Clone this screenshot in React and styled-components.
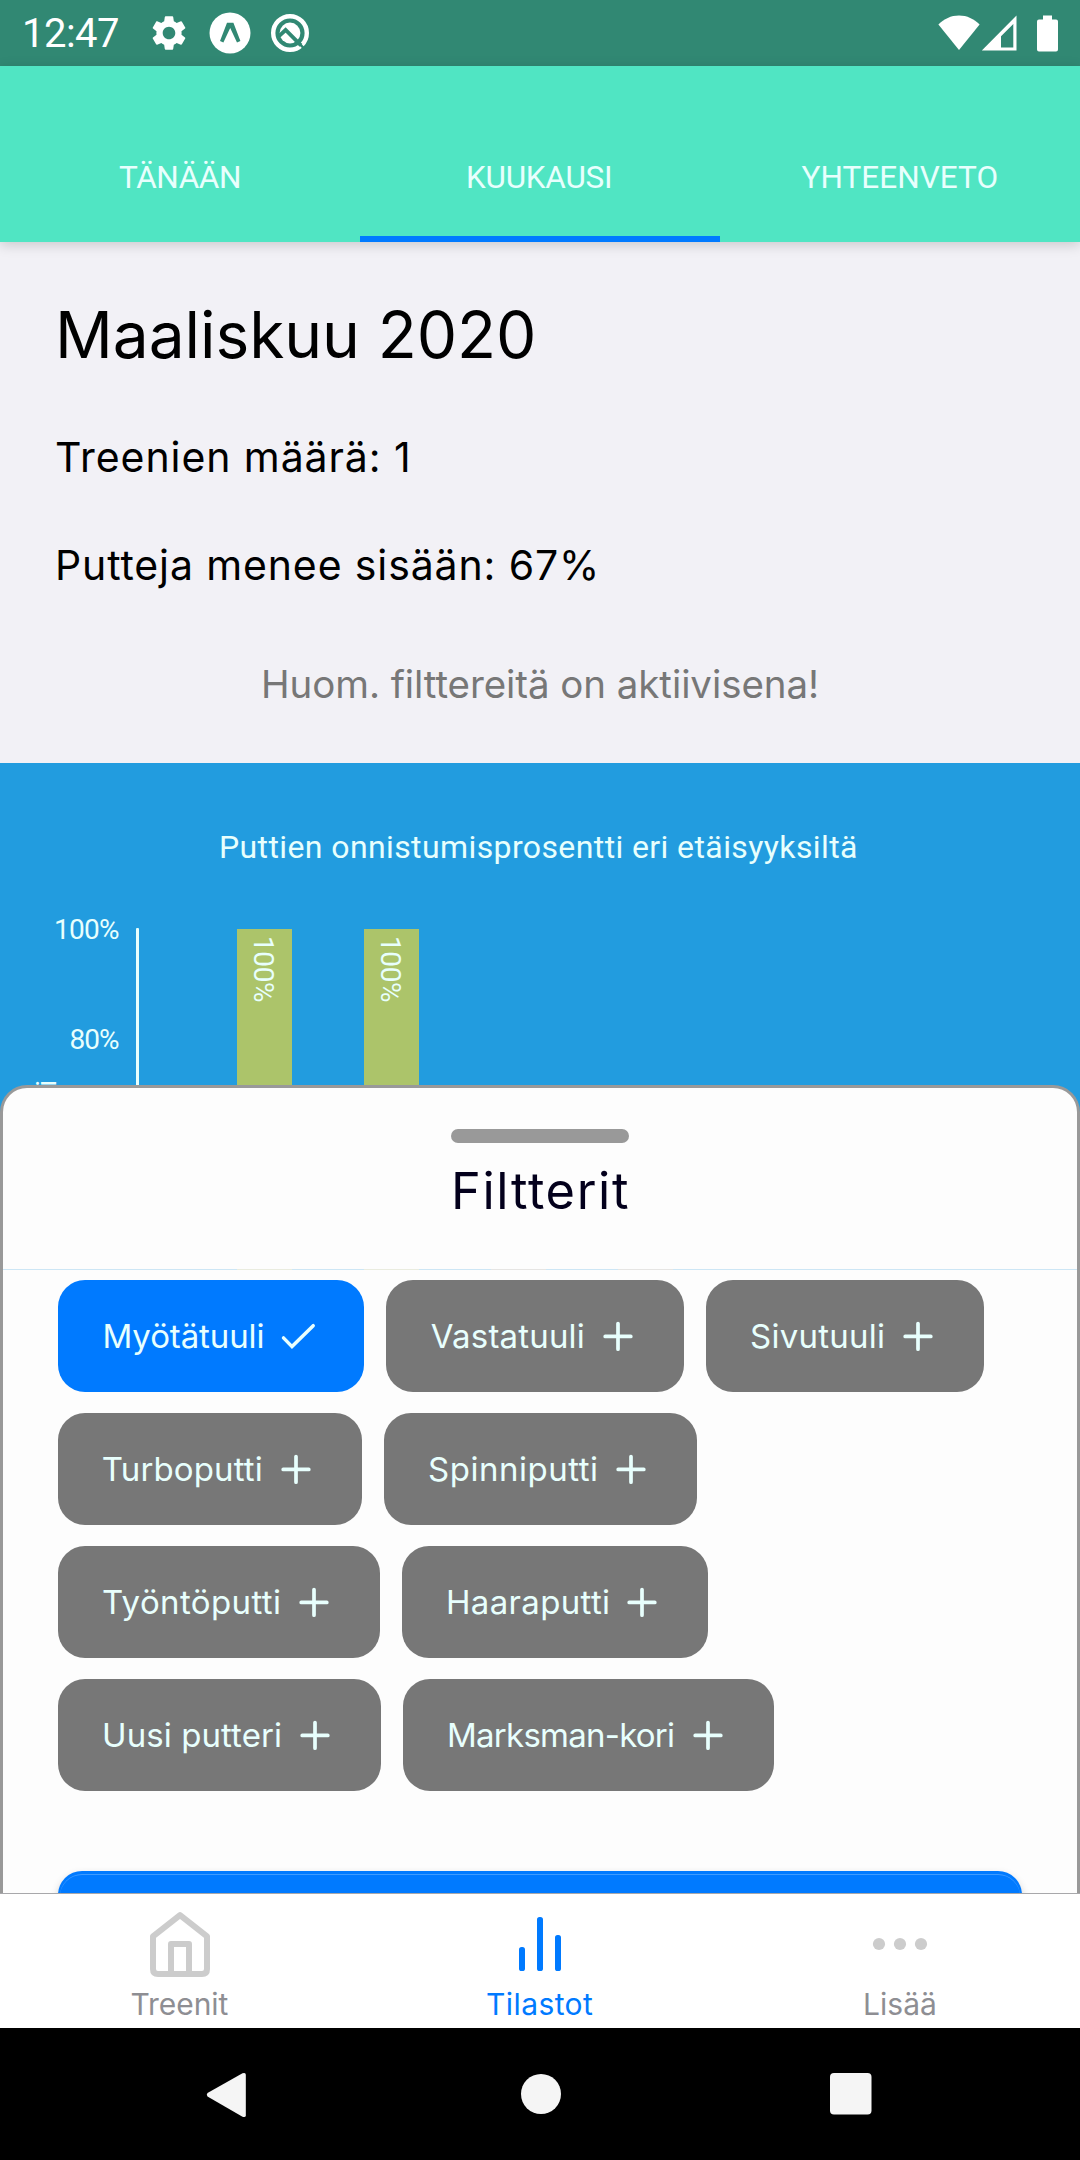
import React, { useLayoutEffect, useState } from "react";
import styled, { createGlobalStyle } from "styled-components";
import { MdSettings } from "react-icons/md";

const sans = "Inter, 'Open Sans', sans-serif";
const system = "Roboto, 'Noto Sans', sans-serif";
const mint = "#e8fffd";

const GlobalStyle = createGlobalStyle`
  * { box-sizing: border-box; }
  body { margin: 0; background: #000; }
`;

/* Text whose tracking is computed so that its ink spans a given width. */
const TextBox = styled.span`
  display: block;
  flex: none;
  width: ${(p) => p.$width}px;
  font: ${(p) => `400 ${p.$size}px/${p.$line}px ${p.$family}`};
  color: ${(p) => p.$color};
  white-space: nowrap;
`;
const TextInk = styled.span`
  display: block;
`;

function Fitted({ children, width, size, line, family = sans, color = "#000" }) {
  const [fit, setFit] = useState({});
  useLayoutEffect(() => {
    const ctx = document.createElement("canvas").getContext("2d");
    ctx.font = `400 ${size}px ${family}`;
    const m = ctx.measureText(children);
    const ink = m.actualBoundingBoxRight + m.actualBoundingBoxLeft;
    setFit({
      letterSpacing: `${(width - ink) / (children.length - 1)}px`,
      marginLeft: `${m.actualBoundingBoxLeft}px`,
    });
  }, [children, width, size, family]);
  return (
    <TextBox $width={width} $size={size} $line={line} $family={family} $color={color}>
      <TextInk style={fit}>{children}</TextInk>
    </TextBox>
  );
}

const Screen = styled.div`
  width: 1080px;
  height: 2160px;
  display: flex;
  flex-direction: column;
  overflow: hidden;
  background: #f2f1f6;
`;

const StatusBar = styled.header`
  flex: none;
  height: 66px;
  display: flex;
  align-items: center;
  padding: 0 22px 0 25px;
  background: #318873;
  color: #fff;
  svg { display: block; flex: none; }
`;
const Clock = styled.div`
  padding-top: 2px;
`;
const StatusIcons = styled.div`
  display: flex;
  align-items: center;
  gap: 19px;
  margin-left: 30px;
`;
const SystemIcons = styled.div`
  display: flex;
  align-items: center;
  margin-left: auto;
`;
const BatterySlot = styled.div`
  margin-left: 20px;
`;
const WifiSlot = styled.div`
  margin-right: 1px;
`;

const TabBar = styled.nav`
  flex: none;
  height: 176px;
  display: grid;
  grid-template-columns: repeat(3, 1fr);
  background: #50e5c3;
  box-shadow: 0 3px 12px rgba(0, 0, 0, 0.17);
  z-index: 1;
`;
const Tab = styled.div`
  display: flex;
  justify-content: center;
  padding: 92px 2px 0 0;
  border-bottom: 6px solid ${(p) => (p.$active ? "#007aff" : "transparent")};
`;

const Summary = styled.section`
  flex: none;
  height: 521px;
  padding: 53px 0 0 56px;
  display: flex;
  flex-direction: column;
  align-items: flex-start;
`;
const Title = styled.h1`
  margin: 0 0 58px 4px;
`;
const Stat = styled.p`
  margin: 0 0 ${(p) => p.$gap}px ${(p) => p.$indent || 0}px;
`;
const Notice = styled.p`
  margin: 0 0 0 208px;
`;

const Chart = styled.section`
  flex: none;
  height: 370px;
  padding-top: 64px;
  background: #229cdf;
  display: flex;
  flex-direction: column;
  align-items: center;
`;
const ChartTitle = styled.div`
  padding-right: 3px;
`;
const Plot = styled.div`
  align-self: stretch;
  margin-top: 48px;
  flex: 1;
  display: flex;
`;
const AxisTitle = styled.div`
  width: 24px;
  margin-left: 35px;
  padding-top: 165px;
  font: 400 28px/24px ${system};
  color: ${mint};
  span { display: block; writing-mode: vertical-rl; transform: rotate(180deg); }
`;
const Ticks = styled.div`
  width: 60px;
  display: flex;
  flex-direction: column;
  align-items: flex-end;
  gap: 79.5px;
`;
const Axis = styled.div`
  width: 3px;
  margin: 13px 98px 0 17px;
  background: ${mint};
  border-radius: 1px;
`;
const Bars = styled.div`
  display: flex;
  gap: 72px;
  padding-top: 14px;
`;
const Bar = styled.div`
  width: 55px;
  padding: 7px 17px 0 0;
  background: #acc46a;
  font: 400 28px/24px ${system};
  color: ${mint};
  display: flex;
  justify-content: flex-end;
  letter-spacing: -0.4px;
  span { writing-mode: vertical-rl; }
`;

const Sheet = styled.section`
  flex: none;
  height: 808px;
  margin-top: -48px;
  position: relative;
  border: 3px solid #999;
  border-bottom: 0;
  border-radius: 27px 27px 0 0;
  background: #fdfdfd;
  display: flex;
  flex-direction: column;
  overflow: hidden;
`;
const SheetHeader = styled.div`
  flex: none;
  height: 181px;
  display: flex;
  flex-direction: column;
  align-items: center;
  padding-top: 41px;
`;
const Handle = styled.div`
  width: 178px;
  height: 14px;
  margin-bottom: 18px;
  border-radius: 7px;
  background: #999;
`;
const SheetTitle = styled.div`
  padding-left: 3px;
`;
const Seam = styled.div`
  flex: none;
  height: 1px;
  background: linear-gradient(
    90deg,
    #cde6f5 0 234px, #eaecdf 234px 289px, #cde6f5 289px 361px, #eaecdf 361px 416px,
    #cde6f5 416px 488px, #e6e5e3 488px 543px, #cde6f5 543px 615px, #e6e5e3 615px 670px, #cde6f5 670px
  );
`;
const SheetBody = styled.div`
  flex: 1;
  padding: 10px 55px 0;
`;
const ChipRow = styled.div`
  display: flex;
  gap: 22px;
  margin-bottom: 21.5px;
`;
const Chip = styled.button`
  width: ${(p) => p.$width}px;
  height: 111.5px;
  padding: 0 44px 0 ${(p) => 44 + p.$indent}px;
  border: 0;
  border-radius: 27px;
  background: ${(p) => (p.$active ? "#007aff" : "#777")};
  display: flex;
  align-items: center;
  justify-content: space-between;
  text-align: left;
  svg { display: block; flex: none; }
`;
const ApplyButton = styled.div`
  height: 80px;
  margin-top: 80px;
  padding: 3px 2px;
  border-radius: 24px;
  background: #007aff;
  box-shadow: 0 4px 8px rgba(0, 0, 0, 0.2);
  &::before {
    content: "";
    display: block;
    height: 60px;
    border-top: 1px solid #3e9bff;
    border-radius: 22px;
  }
`;

const BottomTabs = styled.nav`
  flex: none;
  height: 135px;
  position: relative;
  border-top: 1px solid #a8a8ab;
  background: #fff;
  display: grid;
  grid-template-columns: repeat(3, 1fr);
`;
const BottomTab = styled.div`
  display: flex;
  flex-direction: column;
  align-items: center;
  padding-top: 14px;
  svg { display: block; margin-bottom: 6px; }
`;

const AndroidNav = styled.footer`
  flex: none;
  height: 132px;
  padding-left: 196px;
  background: #000;
  display: flex;
  align-items: center;
  gap: 269px;
  svg { display: block; flex: none; }
`;

const ExpoIcon = () => (
  <svg width="42" height="42" viewBox="0 0 42 42">
    <circle cx="21" cy="21" r="20.5" fill="#fff" />
    <path d="M18 10.8h6.4l7 18.2-3.4 1.6L21.2 16 14.4 30.6 11 29z" fill="#318873" />
  </svg>
);

const AndroidQIcon = () => (
  <svg width="40" height="40" viewBox="0 0 40 40" fill="none">
    <circle cx="20" cy="20" r="16.8" stroke="#fff" strokeWidth="4.4" />
    <circle cx="20" cy="20" r="10.4" fill="#fff" />
    <path d="M9 23.2l6.6-6.2 15.400 15.400" stroke="#318873" strokeWidth="3.8" />
    <path d="M29 30.400l7 7" stroke="#318873" strokeWidth="2.400" />
  </svg>
);

const WifiIcon = () => (
  <svg width="42" height="36" viewBox="0 0 42 36">
    <path d="M21 35L.4 9.5C6 4 13 .6 21 .6S36 4 41.6 9.5z" fill="#fff" />
  </svg>
);

const SignalIcon = () => (
  <svg width="36" height="36" viewBox="0 0 36 36">
    <path d="M35.5.5v35H.8zM32.3 9L20 21.3v11.1h12.3z" fill="#fff" fillRule="evenodd" />
  </svg>
);

const BatteryIcon = () => (
  <svg width="21" height="37" viewBox="0 0 21 37">
    <path d="M6 .5h9v4h4q2 0 2 2V34.500q0 2-2 2H2q-2 0-2-2V6.500q0-2 2-2h4z" fill="#fff" />
  </svg>
);

const PlusIcon = () => (
  <svg width="44" height="44" viewBox="0 0 44 44">
    <path d="M22 9.600v25.600M9.200 22.400h25.600" stroke={mint} strokeWidth="3.700" strokeLinecap="round" />
  </svg>
);

const CheckIcon = () => (
  <svg width="44" height="44" viewBox="0 0 44 44" fill="none">
    <path d="M7.500 23.900l8.500 8.700L37.200 11.700" stroke={mint} strokeWidth="3.500" strokeLinecap="round" strokeLinejoin="miter" />
  </svg>
);

const HomeIcon = () => (
  <svg width="66" height="72" viewBox="0 0 66 72" fill="none" stroke="#ccc" strokeWidth="6" strokeLinejoin="round">
    <path d="M33 7.200L60 28.300V61q0 5-5 5H11q-5 0-5-5V28.300z" />
    <path d="M24 65V36h18v29" />
  </svg>
);

const StatsIcon = () => (
  <svg width="66" height="72" viewBox="0 0 66 72" fill="#007aff">
    <rect x="12" y="39" width="6" height="24" rx="2.600" />
    <rect x="30" y="9" width="6" height="54" rx="2.600" />
    <rect x="48" y="27" width="6" height="36" rx="2.600" />
  </svg>
);

const MoreIcon = () => (
  <svg width="66" height="72" viewBox="0 0 66 72" fill="#ccc">
    <circle cx="12" cy="36" r="6.100" />
    <circle cx="33" cy="36" r="6.100" />
    <circle cx="54" cy="36" r="6.100" />
  </svg>
);

const tabs = [
  { label: "TÄNÄÄN", width: 120 },
  { label: "KUUKAUSI", width: 142, active: true },
  { label: "YHTEENVETO", width: 195 },
];

const chipRows = [
  [
    { label: "Myötätuuli", text: 159, indent: 2.5, width: 306, active: true },
    { label: "Vastatuuli", text: 153, indent: 0.8, width: 298 },
    { label: "Sivutuuli", text: 133, indent: 1, width: 278 },
  ],
  [
    { label: "Turboputti", text: 159, indent: 0.8, width: 304 },
    { label: "Spinniputti", text: 168, indent: 1, width: 313 },
  ],
  [
    { label: "Työntöputti", text: 177, indent: 1, width: 322 },
    { label: "Haaraputti", text: 161, indent: 2, width: 306 },
  ],
  [
    { label: "Uusi putteri", text: 177, indent: 2, width: 323 },
    { label: "Marksman-kori", text: 225, indent: 2, width: 371 },
  ],
];

const bottomTabs = [
  { label: "Treenit", width: 97, color: "#8e8e93", Icon: HomeIcon },
  { label: "Tilastot", width: 106, color: "#007aff", Icon: StatsIcon },
  { label: "Lisää", width: 70, color: "#8e8e93", Icon: MoreIcon },
];

export default function App() {
  return (
    <Screen>
      <GlobalStyle />
      <StatusBar>
        <Clock><Fitted width={93} size={40} line={66} family={system} color="#fff">12:47</Fitted></Clock>
        <StatusIcons>
          <MdSettings size={42} />
          <ExpoIcon />
          <AndroidQIcon />
        </StatusIcons>
        <SystemIcons>
          <WifiSlot><WifiIcon /></WifiSlot>
          <SignalIcon />
          <BatterySlot><BatteryIcon /></BatterySlot>
        </SystemIcons>
      </StatusBar>

      <TabBar>
        {tabs.map((t) => (
          <Tab key={t.label} $active={t.active}>
            <Fitted width={t.width} size={31.5} line={40} family={system} color={mint}>{t.label}</Fitted>
          </Tab>
        ))}
      </TabBar>

      <Summary>
        <Title><Fitted width={473} size={64} line={80}>Maaliskuu 2020</Fitted></Title>
        <Stat $gap={60}><Fitted width={352} size={41} line={48}>Treenien määrä: 1</Fitted></Stat>
        <Stat $gap={71} $indent={2}><Fitted width={537} size={41} line={48}>Putteja menee sisään: 67%</Fitted></Stat>
        <Notice><Fitted width={553} size={38.5} line={48} color="#777">Huom. filttereitä on aktiivisena!</Fitted></Notice>
      </Summary>

      <Chart>
        <ChartTitle>
          <Fitted width={635} size={32} line={40} family={system} color={mint}>
            Puttien onnistumisprosentti eri etäisyyksiltä
          </Fitted>
        </ChartTitle>
        <Plot>
          <AxisTitle><span>i</span></AxisTitle>
          <Ticks>
            <Fitted width={63} size={28} line={30} family={system} color={mint}>100%</Fitted>
            <Fitted width={48.5} size={28} line={30} family={system} color={mint}>80%</Fitted>
          </Ticks>
          <Axis />
          <Bars>
            <Bar><span>100%</span></Bar>
            <Bar><span>100%</span></Bar>
          </Bars>
        </Plot>
      </Chart>

      <Sheet>
        <SheetHeader>
          <Handle />
          <SheetTitle><Fitted width={173} size={50.5} line={60} color="#03001c">Filtterit</Fitted></SheetTitle>
        </SheetHeader>
        <Seam />
        <SheetBody>
          {chipRows.map((row) => (
            <ChipRow key={row[0].label}>
              {row.map((c) => (
                <Chip key={c.label} $width={c.width} $indent={c.indent} $active={c.active}>
                  <Fitted width={c.text} size={33} line={40} color={mint}>{c.label}</Fitted>
                  {c.active ? <CheckIcon /> : <PlusIcon />}
                </Chip>
              ))}
            </ChipRow>
          ))}
          <ApplyButton />
        </SheetBody>
      </Sheet>

      <BottomTabs>
        {bottomTabs.map(({ label, width, color, Icon }) => (
          <BottomTab key={label}>
            <Icon />
            <Fitted width={width} size={30} line={36} color={color}>{label}</Fitted>
          </BottomTab>
        ))}
      </BottomTabs>

      <AndroidNav>
        <svg width="56" height="56" viewBox="0 0 56 56">
          <path d="M11.500 27L46.500 7.300q3.300-1.300 3.300 1.500v40.400q0 2.800-3.300 1.500L11.500 30.600q-1.500-1.800 0-3.600z" fill="#f5f5f5" />
        </svg>
        <svg width="40" height="40" viewBox="0 0 40 40">
          <circle cx="20" cy="20" r="20" fill="#f5f5f5" />
        </svg>
        <svg width="42" height="42" viewBox="0 0 42 42">
          <rect width="41.500" height="41.500" rx="4" fill="#f5f5f5" />
        </svg>
      </AndroidNav>
    </Screen>
  );
}
